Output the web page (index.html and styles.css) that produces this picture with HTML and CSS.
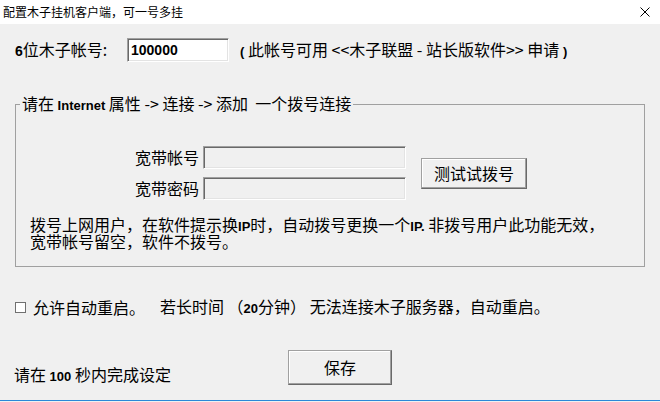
FILE: index.html
```html
<!DOCTYPE html>
<html lang="zh-CN">
<head>
<meta charset="utf-8">
<title>配置木子挂机客户端</title>
<link rel="stylesheet" href="styles.css">
</head>
<body>
<div class="window">
  <div class="titlebar">
    <span class="title">配置木子挂机客户端，可一号多挂</span>
    <svg class="close" width="10" height="10" viewBox="0 0 10 10"><path d="M0.5 0.5 L9.5 9.5 M9.5 0.5 L0.5 9.5" stroke="#000" stroke-width="1" fill="none"/></svg>
  </div>
  <div class="content">
    <div class="account">
      <span class="account-label"><b class="lb">6</b>位木子帐号:</span>
      <div class="account-input">100000</div>
      <span class="account-note"><b class="lb">(</b> 此帐号可用 &lt;&lt;木子联盟 - 站长版软件&gt;&gt; 申请 <b class="lb">)</b></span>
    </div>
    <fieldset class="group">
      <legend class="group-title">请在 <b class="lb">Internet</b> 属性 -&gt; 连接 -&gt; 添加&nbsp; 一个拨号连接</legend>
      <div class="dial">
        <div class="dial-fields">
          <span class="dial-label">宽带帐号</span>
          <div class="dial-input"></div>
          <span class="dial-label">宽带密码</span>
          <div class="dial-input"></div>
        </div>
        <div class="btn test-btn">测试试拨号</div>
      </div>
      <div class="hint">
        <div class="hint-line">拨号上网用户，在软件提示换<b class="lb">IP</b>时，自动拨号更换一个<b class="lb">IP.</b> 非拨号用户此功能无效，</div>
        <div class="hint-line">宽带帐号留空，软件不拨号。</div>
      </div>
    </fieldset>
    <div class="restart">
      <span class="checkbox"></span>
      <span class="restart-label">允许自动重启。</span>
      <span class="restart-note">若长时间 （<b class="lb">20</b>分钟） 无法连接木子服务器，自动重启。</span>
    </div>
    <div class="footer">
      <span class="timer">请在 <b class="lb">100</b> 秒内完成设定</span>
      <div class="btn save-btn">保存</div>
    </div>
  </div>
  <div class="bottomline"></div>
</div>
</body>
</html>
```
FILE: styles.css
```css
html, body {
  margin: 0;
  padding: 0;
  width: 660px;
  height: 402px;
  overflow: hidden;
  background: #f0f0f0;
}
body {
  font-family: "Noto Sans CJK SC", "Liberation Sans", sans-serif;
  font-size: 16px;
  line-height: 17px;
  color: #000;
}
.window {
  width: 660px;
  height: 402px;
  display: flex;
  flex-direction: column;
}
.titlebar {
  height: 24px;
  flex: none;
  background: #fff;
  display: flex;
  align-items: center;
  justify-content: space-between;
  padding: 0 10px 0 3px;
  font-size: 12px;
}
.title {
  line-height: 14px;
}
.close {
  display: block;
}
.content {
  height: 376px;
  flex: none;
  box-sizing: border-box;
  padding: 0 15px;
  display: flex;
  flex-direction: column;
}
.lb {
  font-family: "Liberation Sans", sans-serif;
  font-weight: bold;
  font-size: 13px;
}
.account {
  margin-top: 14px;
  height: 24px;
  display: flex;
  align-items: center;
  white-space: nowrap;
}
.account-label {
  width: 112px;
  flex: none;
}
.account-label .lb {
  font-size: 14px;
}
.account-input {
  width: 102px;
  height: 24px;
  box-sizing: border-box;
  flex: none;
  background: #fff;
  border: 1px solid;
  border-color: #a0a0a0 #fff #fff #a0a0a0;
  box-shadow: inset 1px 1px #696969, inset -1px -1px #e3e3e3;
  font-family: "Liberation Sans", sans-serif;
  font-weight: bold;
  font-size: 14px;
  line-height: 22px;
  padding-left: 3px;
}
.account-note {
  margin-left: 11px;
}
.group {
  margin: 33px 0 0;
  padding: 0 0 16px;
  border: 1px solid #a0a0a0;
  min-width: 0;
}
.group-title {
  margin-left: 4px;
  padding: 0 2px;
  white-space: nowrap;
}
.dial {
  display: flex;
  align-items: center;
  margin: 32px 0 0 119px;
}
.dial-fields {
  display: grid;
  grid-template-columns: 64px 203px;
  column-gap: 4px;
  row-gap: 8px;
  align-items: center;
}
.dial-input {
  height: 23px;
  box-sizing: border-box;
  background: #f0f0f0;
  border: 1px solid;
  border-color: #a0a0a0 #fff #fff #a0a0a0;
  box-shadow: inset 1px 1px #696969, inset -1px -1px #e3e3e3;
}
.btn {
  box-sizing: border-box;
  display: flex;
  align-items: center;
  justify-content: center;
  background: #f0f0f0;
  border: 1px solid;
  border-color: #a0a0a0 #696969 #696969 #a0a0a0;
  box-shadow: inset -1px -1px #a0a0a0, inset 1px 1px #fff;
}
.test-btn {
  margin-left: 15px;
  width: 106px;
  height: 31px;
}
.hint {
  margin: 16px 0 0 14px;
  white-space: nowrap;
}
.hint-line {
  height: 17px;
}
.restart {
  margin-top: 31px;
  display: flex;
  align-items: center;
  white-space: nowrap;
}
.checkbox {
  width: 11px;
  height: 11px;
  box-sizing: border-box;
  background: #fff;
  border: 1px solid #707070;
  flex: none;
}
.restart-label {
  margin-left: 7px;
}
.restart-note {
  margin-left: 15px;
}
.footer {
  margin-top: auto;
  padding-bottom: 15px;
  display: flex;
  align-items: flex-end;
}
.timer {
  margin-left: -1px;
  width: 274px;
  flex: none;
  white-space: nowrap;
}
.save-btn {
  width: 104px;
  height: 35px;
}
.bottomline {
  height: 1px;
  flex: none;
  background: #2b88d8;
}
```
